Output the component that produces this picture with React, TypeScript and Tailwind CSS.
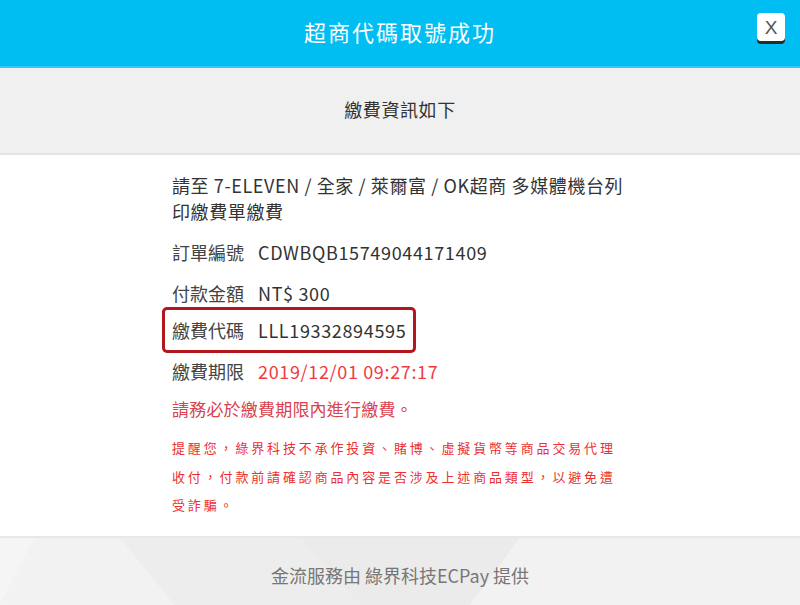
import React from "react";

const font = { fontFamily: '"Noto Sans CJK TC", "Noto Sans", sans-serif' };

function Row({ label, children }: { label: string; children: React.ReactNode }) {
  return (
    <div className="flex items-center">
      <span className="w-[86px] shrink-0 text-[#444]">{label}</span>
      <span className="whitespace-nowrap tracking-[0.65px]">{children}</span>
    </div>
  );
}

export default function App() {
  return (
    <div className="w-[800px] h-[605px] flex flex-col bg-white overflow-hidden" style={font}>
      {/* Header */}
      <div className="relative h-[68px] shrink-0 bg-[#00bef2] border-b-2 border-[#2ccaf5] flex items-center justify-center">
        <h1 className="text-white text-[22px] tracking-[2px] leading-none pb-[4px]">超商代碼取號成功</h1>
        <button className="absolute right-[15px] top-[13px] w-[28px] h-[28px] bg-white rounded-[4px] shadow-[0_3px_0_#2a2a2a] flex items-center justify-center text-[#555] text-[19px] leading-none" style={{ fontFamily: '"Liberation Sans", sans-serif' }}>
          X
        </button>
      </div>

      {/* Sub header */}
      <div className="h-[87px] shrink-0 bg-[#f0f0f0] border-b-2 border-[#e4e4e4] flex items-center justify-center">
        <span className="text-[18px] text-[#333] tracking-[0.6px] pb-[2px]">繳費資訊如下</span>
      </div>

      {/* Body */}
      <div className="flex-1 border-b-2 border-[#e8e8e8]">
        <div className="w-[456px] mx-auto pt-[17px] text-[18px] text-[#333]">
          <p className="leading-[26px]">
            <span className="whitespace-nowrap tracking-[0.6px]">請至 7-ELEVEN / 全家 / 萊爾富 / OK超商 多媒體機台列</span>
            <br />
            <span className="tracking-[0.6px]">印繳費單繳費</span>
          </p>
          <div className="h-[56px] flex items-center">
            <Row label="訂單編號">CDWBQB15749044171409</Row>
          </div>
          <div className="h-[26px] flex items-center">
            <Row label="付款金額">NT$ 300</Row>
          </div>
          <div className="h-[1px]" />
          <div className="-ml-[10px] w-[254px] h-[46px] border-[3px] border-[#b3161c] rounded-[5px] pl-[7px] flex items-center">
            <Row label="繳費代碼">LLL19332894595</Row>
          </div>
          <div className="h-[36px] flex items-center">
            <Row label="繳費期限">
              <span className="text-[#f23a3f]">2019/12/01 09:27:17</span>
            </Row>
          </div>
          <div className="h-[40px] flex items-center text-[17px] text-[#d8434e] tracking-[0.2px]">
            請務必於繳費期限內進行繳費。
          </div>
          <p className="mt-[5px] text-[13px] leading-[28.5px] tracking-[2.85px] text-[#ec2f2f] whitespace-nowrap">
            提醒您，綠界科技不承作投資、賭博、虛擬貨幣等商品交易代理
            <br />
            收付，付款前請確認商品內容是否涉及上述商品類型，以避免遭
            <br />
            受詐騙。
          </p>
        </div>
      </div>

      {/* Footer */}
      <div className="relative h-[67px] shrink-0 bg-[#f0f0f0] flex items-center justify-center overflow-hidden">
        <svg className="absolute inset-0" width="800" height="67" viewBox="0 0 800 67">
          <polygon points="0,0 35,0 0,67" fill="#f5f5f5" />
          <polygon points="35,0 120,0 175,67 0,67" fill="#f2f2f2" />
          <polygon points="120,0 300,0 360,67 175,67" fill="#ededed" />
          <polygon points="300,0 520,0 470,67 360,67" fill="#ebebeb" />
          <polygon points="520,0 800,0 800,67 470,67" fill="#f2f2f2" />
        </svg>
        <span className="relative text-[18px] text-[#777] pt-[8px]">金流服務由 綠界科技ECPay 提供</span>
      </div>
    </div>
  );
}
